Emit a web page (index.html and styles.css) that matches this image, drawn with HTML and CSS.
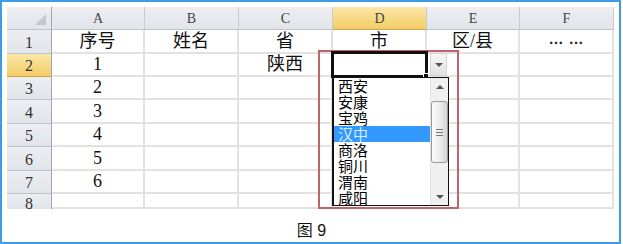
FILE: index.html
```html
<!DOCTYPE html>
<html lang="zh-CN">
<head>
  <meta charset="UTF-8" />
  <title>图 9</title>
  <link rel="stylesheet" href="styles.css">
</head>
<body>
  <div class="frame">
    <div class="sheet">
      <div class="h corner">
        <svg width="11" height="11" viewBox="0 0 11 11"><polygon points="11,0 11,11 0,11" fill="#c4c8ce"/></svg>
      </div>
      <div class="h">A</div>
      <div class="h">B</div>
      <div class="h">C</div>
      <div class="h active">D</div>
      <div class="h">E</div>
      <div class="h">F</div>

      <div class="h n">1</div>
      <div class="c">序号</div>
      <div class="c">姓名</div>
      <div class="c">省</div>
      <div class="c">市</div>
      <div class="c">区/县</div>
      <div class="c dots">… …</div>

      <div class="h n active">2</div>
      <div class="c">1</div>
      <div class="c"></div>
      <div class="c">陕西</div>
      <div class="c"></div>
      <div class="c"></div>
      <div class="c"></div>

      <div class="h n">3</div>
      <div class="c">2</div>
      <div class="c"></div><div class="c"></div><div class="c"></div><div class="c"></div><div class="c"></div>

      <div class="h n">4</div>
      <div class="c">3</div>
      <div class="c"></div><div class="c"></div><div class="c"></div><div class="c"></div><div class="c"></div>

      <div class="h n">5</div>
      <div class="c">4</div>
      <div class="c"></div><div class="c"></div><div class="c"></div><div class="c"></div><div class="c"></div>

      <div class="h n">6</div>
      <div class="c">5</div>
      <div class="c"></div><div class="c"></div><div class="c"></div><div class="c"></div><div class="c"></div>

      <div class="h n">7</div>
      <div class="c">6</div>
      <div class="c"></div><div class="c"></div><div class="c"></div><div class="c"></div><div class="c"></div>

      <div class="h n last">8</div>
      <div class="c"></div><div class="c"></div><div class="c"></div><div class="c"></div><div class="c"></div><div class="c"></div>
    </div>

    <div class="caption">图 9</div>

    <!-- dropdown overlay on D2 -->
    <div class="red-box"></div>
    <div class="editor"><span class="handle"></span></div>
    <div class="drop-btn"><span class="tri-down"></span></div>
    <div class="listbox">
      <div class="items">
        <div class="item">西安</div>
        <div class="item">安康</div>
        <div class="item">宝鸡</div>
        <div class="item selected">汉中</div>
        <div class="item">商洛</div>
        <div class="item">铜川</div>
        <div class="item">渭南</div>
        <div class="item">咸阳</div>
      </div>
      <div class="scroll">
        <div class="arrow"><span class="tri-up"></span></div>
        <div class="thumb">
          <span class="grip"></span>
          <span class="grip"></span>
          <span class="grip"></span>
        </div>
        <div class="track"></div>
        <div class="arrow"><span class="tri-down"></span></div>
      </div>
    </div>
  </div>
</body>
</html>
```

FILE: styles.css
```css
body {
  margin: 0;
  background-color: #fff;
  font-family: "Liberation Serif", "Noto Sans CJK SC", serif;
}

.frame {
  position: relative;
  width: 621px;
  height: 244px;
  box-sizing: border-box;
  border: 2px solid #3d9be9;
  padding: 5px 0 0 5px;
  background-color: #fff;
}

.sheet {
  display: grid;
  grid-template-columns: 45px 93px 94px 94px 94px 93px 94px;
  grid-template-rows: 23px 24px 23px 23px 24px 23px 24px 23px 15px;
  width: 607px;
  overflow: hidden;
}

.c {
  display: flex;
  justify-content: center;
  align-items: flex-end;
  box-sizing: border-box;
  border-right: 2px solid #e2e2e2;
  border-bottom: 2px solid #e2e2e2;
  font-size: 18px;
  line-height: 21px;
  color: #111;
  overflow: hidden;
}

.h {
  display: flex;
  justify-content: center;
  align-items: center;
  box-sizing: border-box;
  background: linear-gradient(#eceef2, #e1e4e9);
  border-right: 1px solid #c6cbd2;
  border-bottom: 1px solid #bcc3cc;
  font-size: 14px;
  color: #444;
  padding-top: 1px;
}

.h.n {
  font-size: 16px;
  color: #333;
  align-items: flex-end;
  line-height: 20px;
  border-right: 1px solid #9fa7b2;
}

.h.last {
  align-items: flex-start;
  line-height: 18px;
  border-bottom: none;
}

.h.active {
  background: linear-gradient(#fae7a8, #f3cc66);
  border-bottom-color: #c9a74e;
}

.corner {
  justify-content: flex-end;
  align-items: flex-end;
  padding: 0 5px 4px 0;
  border-right: 1px solid #9fa7b2;
}

.corner svg {
  display: block;
}

.dots {
  font-family: "Liberation Sans", sans-serif;
  font-size: 15px;
  font-weight: bold;
  color: #222;
  align-items: center;
  padding-bottom: 6px;
  word-spacing: 1px;
}

.caption {
  margin-top: 14px;
  padding-right: 3px;
  text-align: center;
  font-family: "Liberation Sans", "Noto Sans CJK SC", sans-serif;
  font-size: 16px;
  line-height: 16px;
  color: #111;
}

.red-box {
  position: absolute;
  left: 316px;
  top: 48px;
  width: 141px;
  height: 159px;
  box-sizing: border-box;
  border: 2px solid #c0646a;
}

.editor {
  position: absolute;
  left: 329px;
  top: 49px;
  width: 97px;
  height: 27px;
  box-sizing: border-box;
  border: 3px solid #111;
  background-color: #fff;
}

.handle {
  position: absolute;
  right: -4px;
  bottom: -4px;
  width: 4px;
  height: 4px;
  background-color: #111;
  border: 1px solid #fff;
}

.drop-btn {
  position: absolute;
  left: 428px;
  top: 51px;
  width: 17px;
  height: 23px;
  box-sizing: border-box;
  background: linear-gradient(#f6f6f6, #e3e3e3);
  border: 1px solid #d4d4d4;
  display: flex;
  justify-content: center;
  align-items: center;
}

.tri-down {
  width: 0;
  height: 0;
  border-left: 4px solid transparent;
  border-right: 4px solid transparent;
  border-top: 4px solid #555;
}

.tri-up {
  width: 0;
  height: 0;
  border-left: 4px solid transparent;
  border-right: 4px solid transparent;
  border-bottom: 4px solid #555;
}

.listbox {
  position: absolute;
  left: 330px;
  top: 75px;
  width: 117px;
  height: 129px;
  box-sizing: border-box;
  border: 1px solid #111;
  border-left-width: 2px;
  background-color: #fff;
  display: flex;
}

.items {
  flex: 1;
  overflow: hidden;
}

.item {
  height: 16px;
  padding-left: 4px;
  font-family: "Noto Sans CJK SC", sans-serif;
  font-size: 15px;
  line-height: 16px;
  color: #000;
  white-space: nowrap;
}

.item.selected {
  background-color: #3399ff;
  color: #d6ecff;
}

.scroll {
  width: 17px;
  display: flex;
  flex-direction: column;
  background-color: #f0f0f0;
  border-left: 1px solid #e4e4e4;
}

.arrow {
  height: 17px;
  display: flex;
  justify-content: center;
  align-items: center;
}

.thumb {
  height: 62px;
  margin-top: 6px;
  box-sizing: border-box;
  border: 1px solid #9a9a9a;
  border-radius: 3px;
  background: linear-gradient(90deg, #fbfbfb, #e9e9e9 60%, #d2d2d2);
  display: flex;
  flex-direction: column;
  justify-content: center;
  align-items: center;
  gap: 2px;
}

.grip {
  width: 7px;
  height: 1px;
  background-color: #777;
}

.track {
  flex: 1;
}
```
